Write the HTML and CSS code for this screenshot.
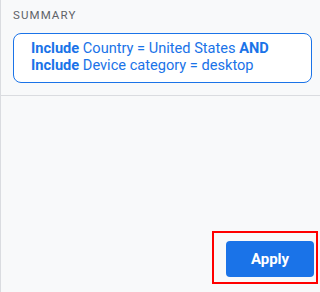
FILE: index.html
```html
<!DOCTYPE html>
<html>
<head>
<meta charset="utf-8">
<link rel="stylesheet" href="styles.css">
</head>
<body>
<div class="panel">
  <section class="summary">
    <div class="label">SUMMARY</div>
    <div class="card">
      <b>Include</b> Country = United States <b>AND</b><br>
      <b>Include</b> Device category = desktop
    </div>
  </section>
  <div class="footer">
    <div class="highlight">
      <button class="apply">Apply</button>
    </div>
  </div>
</div>
</body>
</html>
```
FILE: styles.css
```css
html, body {
  margin: 0;
  padding: 0;
  background: #f8f9fa;
}
.panel {
  height: 292px;
  box-sizing: border-box;
  border-left: 1px solid #dadce0;
  background: #f8f9fa;
  display: flex;
  flex-direction: column;
  font-family: Roboto, "Liberation Sans", sans-serif;
}
.summary {
  padding: 7px 8px 12px 12px;
  border-bottom: 1px solid #dadce0;
}
.label {
  font-size: 11.5px;
  line-height: 16px;
  letter-spacing: 1.1px;
  color: #5f6368;
  margin-bottom: 10px;
}
.card {
  background: #fff;
  border: 1px solid #1a73e8;
  border-radius: 8px;
  padding: 6px 8px 8px 17px;
  font-size: 14.6px;
  line-height: 17px;
  color: #1a73e8;
}
.card b {
  font-weight: 700;
}
.footer {
  flex: 1;
  display: flex;
  justify-content: flex-end;
  align-items: flex-end;
  padding: 0 2px 8px 0;
}
.highlight {
  border: 2px solid #ff0000;
  padding: 8px 2px 5px 12px;
}
.apply {
  display: block;
  width: 88px;
  height: 36px;
  border: none;
  border-radius: 4px;
  background: #1a73e8;
  color: #fff;
  font-family: Roboto, "Liberation Sans", sans-serif;
  font-size: 15px;
  font-weight: 700;
  padding: 0;
}
```
